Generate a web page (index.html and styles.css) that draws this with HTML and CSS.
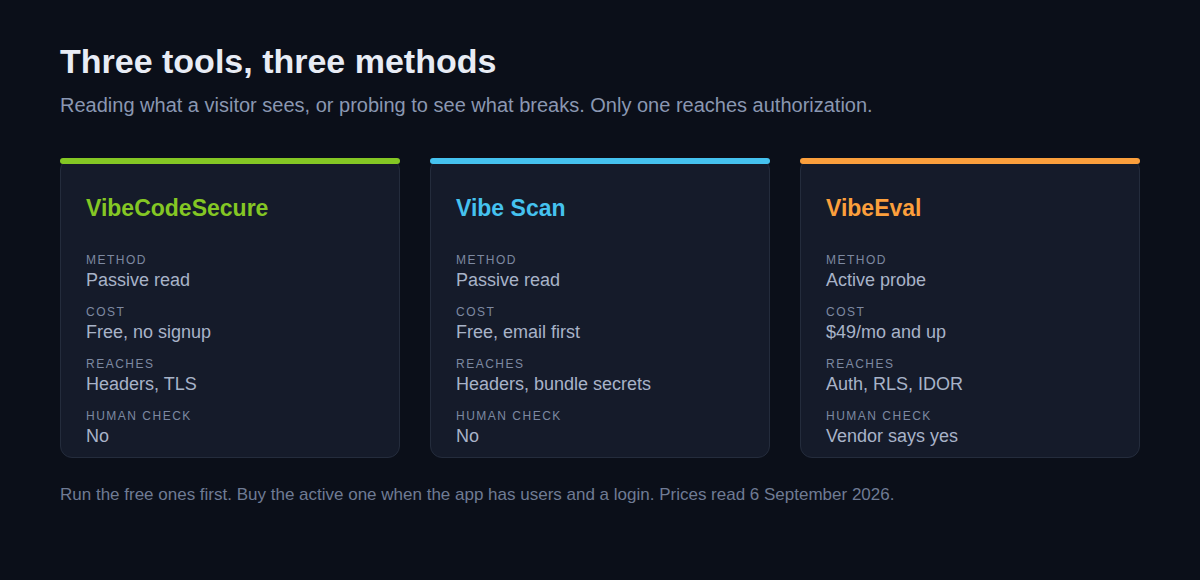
FILE: index.html
```html
<!DOCTYPE html>
<html lang="en">
<head>
<meta charset="utf-8">
<title>Three tools, three methods</title>
<link rel="stylesheet" href="styles.css">
</head>
<body>
<main class="page">
  <h1 class="title">Three tools, three methods</h1>
  <p class="subtitle">Reading what a visitor sees, or probing to see what breaks. Only one reaches authorization.</p>
  <section class="cards">
    <article class="card card-green">
      <h2 class="card-name">VibeCodeSecure</h2>
      <dl class="facts">
        <div class="fact"><dt>Method</dt><dd>Passive read</dd></div>
        <div class="fact"><dt>Cost</dt><dd>Free, no signup</dd></div>
        <div class="fact"><dt>Reaches</dt><dd>Headers, TLS</dd></div>
        <div class="fact"><dt>Human check</dt><dd>No</dd></div>
      </dl>
    </article>
    <article class="card card-blue">
      <h2 class="card-name">Vibe Scan</h2>
      <dl class="facts">
        <div class="fact"><dt>Method</dt><dd>Passive read</dd></div>
        <div class="fact"><dt>Cost</dt><dd>Free, email first</dd></div>
        <div class="fact"><dt>Reaches</dt><dd>Headers, bundle secrets</dd></div>
        <div class="fact"><dt>Human check</dt><dd>No</dd></div>
      </dl>
    </article>
    <article class="card card-orange">
      <h2 class="card-name">VibeEval</h2>
      <dl class="facts">
        <div class="fact"><dt>Method</dt><dd>Active probe</dd></div>
        <div class="fact"><dt>Cost</dt><dd>$49/mo and up</dd></div>
        <div class="fact"><dt>Reaches</dt><dd>Auth, RLS, IDOR</dd></div>
        <div class="fact"><dt>Human check</dt><dd>Vendor says yes</dd></div>
      </dl>
    </article>
  </section>
  <p class="footnote">Run the free ones first. Buy the active one when the app has users and a login. Prices read 6 September 2026.</p>
</main>
</body>
</html>
```

FILE: styles.css
```css
* { box-sizing: border-box; }
html, body {
  margin: 0;
  background: #0b0f19;
}
body {
  font-family: "Liberation Sans", Arial, sans-serif;
  color: #e6eaf3;
}
.page {
  padding: 41px 60px 40px;
}
.title {
  margin: 0;
  font-size: 34px;
  line-height: 40px;
  font-weight: 700;
  color: #e8ecf5;
}
.subtitle {
  margin: 11px 0 0;
  font-size: 20px;
  line-height: 26px;
  color: #8a97b1;
}
.cards {
  display: grid;
  grid-template-columns: repeat(3, 340px);
  gap: 30px;
  margin-top: 40px;
}
.card {
  position: relative;
  height: 300px;
  background: #151b2a;
  border: 1px solid #242c3c;
  border-radius: 12px;
  padding: 35px 25px 0;
}
.card::before {
  content: "";
  position: absolute;
  top: -1px;
  left: -1px;
  right: -1px;
  height: 6px;
  border-radius: 3px;
  background: var(--accent);
}
.card-green { --accent: #84c724; }
.card-blue { --accent: #45c2ef; }
.card-orange { --accent: #fb9f3c; }
.card-name {
  margin: 0;
  font-size: 23px;
  line-height: 28px;
  font-weight: 700;
  color: var(--accent);
}
.facts {
  margin: 30px 0 0;
  display: flex;
  flex-direction: column;
  gap: 13px;
}
.fact dt {
  font-size: 12px;
  line-height: 16px;
  letter-spacing: 1.5px;
  text-transform: uppercase;
  color: #7d89a1;
}
.fact dd {
  margin: 1px 0 0;
  font-size: 18px;
  line-height: 22px;
  color: #a8b3c8;
}
.footnote {
  margin: 26px 0 0;
  font-size: 17px;
  line-height: 22px;
  color: #6f7b94;
}
```
